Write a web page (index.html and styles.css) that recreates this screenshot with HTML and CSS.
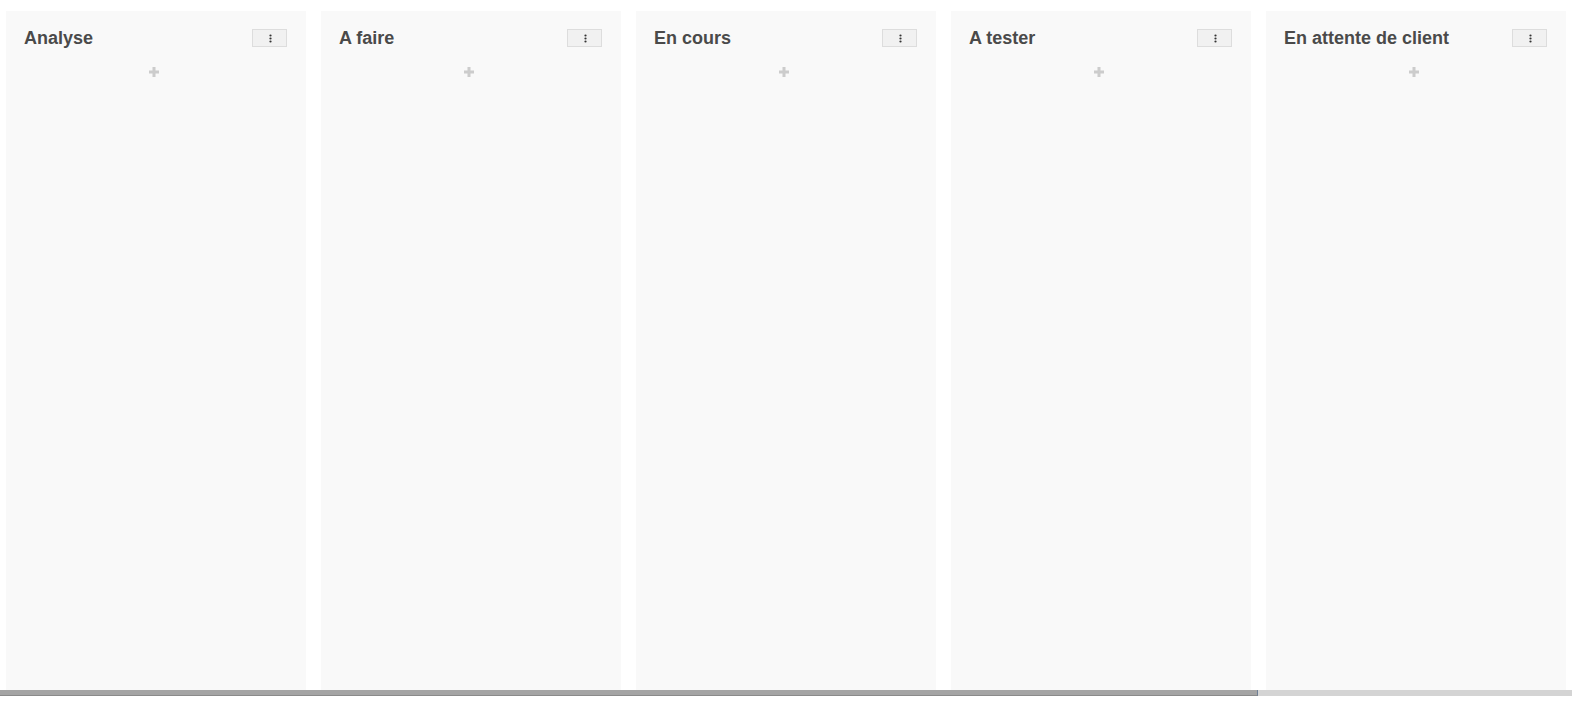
FILE: index.html
```html
<!DOCTYPE html>
<html>
<head>
  <meta charset="utf-8">
  <link rel="stylesheet" href="styles.css">
</head>
<body>
  <div class="board">
    <div class="column">
      <div class="column-header">
        <h2 class="column-title">Analyse</h2>
        <button class="menu-button"><svg width="3" height="9" viewBox="0 0 3 9"><circle cx="1.5" cy="1.5" r="1.1"/><circle cx="1.5" cy="4.5" r="1.1"/><circle cx="1.5" cy="7.5" r="1.1"/></svg></button>
      </div>
      <div class="add-card"><svg width="10" height="10" viewBox="0 0 10 10"><path d="M5 0v10M0 5h10"/></svg></div>
    </div>
    <div class="column">
      <div class="column-header">
        <h2 class="column-title">A faire</h2>
        <button class="menu-button"><svg width="3" height="9" viewBox="0 0 3 9"><circle cx="1.5" cy="1.5" r="1.1"/><circle cx="1.5" cy="4.5" r="1.1"/><circle cx="1.5" cy="7.5" r="1.1"/></svg></button>
      </div>
      <div class="add-card"><svg width="10" height="10" viewBox="0 0 10 10"><path d="M5 0v10M0 5h10"/></svg></div>
    </div>
    <div class="column">
      <div class="column-header">
        <h2 class="column-title">En cours</h2>
        <button class="menu-button"><svg width="3" height="9" viewBox="0 0 3 9"><circle cx="1.5" cy="1.5" r="1.1"/><circle cx="1.5" cy="4.5" r="1.1"/><circle cx="1.5" cy="7.5" r="1.1"/></svg></button>
      </div>
      <div class="add-card"><svg width="10" height="10" viewBox="0 0 10 10"><path d="M5 0v10M0 5h10"/></svg></div>
    </div>
    <div class="column">
      <div class="column-header">
        <h2 class="column-title">A tester</h2>
        <button class="menu-button"><svg width="3" height="9" viewBox="0 0 3 9"><circle cx="1.5" cy="1.5" r="1.1"/><circle cx="1.5" cy="4.5" r="1.1"/><circle cx="1.5" cy="7.5" r="1.1"/></svg></button>
      </div>
      <div class="add-card"><svg width="10" height="10" viewBox="0 0 10 10"><path d="M5 0v10M0 5h10"/></svg></div>
    </div>
    <div class="column">
      <div class="column-header">
        <h2 class="column-title">En attente de client</h2>
        <button class="menu-button"><svg width="3" height="9" viewBox="0 0 3 9"><circle cx="1.5" cy="1.5" r="1.1"/><circle cx="1.5" cy="4.5" r="1.1"/><circle cx="1.5" cy="7.5" r="1.1"/></svg></button>
      </div>
      <div class="add-card"><svg width="10" height="10" viewBox="0 0 10 10"><path d="M5 0v10M0 5h10"/></svg></div>
    </div>
  </div>
  <div class="scrollbar">
    <div class="scrollbar-thumb"></div>
  </div>
</body>
</html>
```

FILE: styles.css
```css
/* Kanban board */

body {
  margin: 0;
  font-family: "Liberation Sans", Arial, sans-serif;
  background: #ffffff;
  overflow: hidden;
}

.board {
  display: flex;
  gap: 15px;
  height: 690px;
  padding: 11px 0 0 6px;
  box-sizing: border-box;
  overflow: hidden;
}

.column {
  flex: 0 0 300px;
  display: flex;
  flex-direction: column;
  background: #f9f9f9;
  padding: 17px 19px 0 18px;
  box-sizing: border-box;
}

.column-header {
  display: flex;
  align-items: center;
  justify-content: space-between;
  height: 20px;
}

.column-title {
  margin: 0;
  font-size: 18px;
  font-weight: bold;
  color: #4a4a4a;
  line-height: 20px;
}

.menu-button {
  width: 35px;
  height: 18px;
  padding: 0 0 0 2px;
  display: flex;
  align-items: center;
  justify-content: center;
  background: #f1f1f1;
  border: 1px solid #dddddd;
  cursor: pointer;
}

.menu-button svg {
  fill: #333333;
}

.add-card {
  display: flex;
  justify-content: center;
  margin-top: 19px;
  padding-right: 3px;
  cursor: pointer;
}

.add-card svg {
  stroke: #cccccc;
  stroke-width: 3;
}

/* fake horizontal scrollbar */
.scrollbar {
  height: 6px;
  background: #d4d4d4;
  display: flex;
}

.scrollbar-thumb {
  width: 1258px;
  background: #a4a4a4;
  border-right: 1px solid #6e7f96;
  border-bottom: 1px solid #8a8a8a;
  box-sizing: border-box;
}
```
